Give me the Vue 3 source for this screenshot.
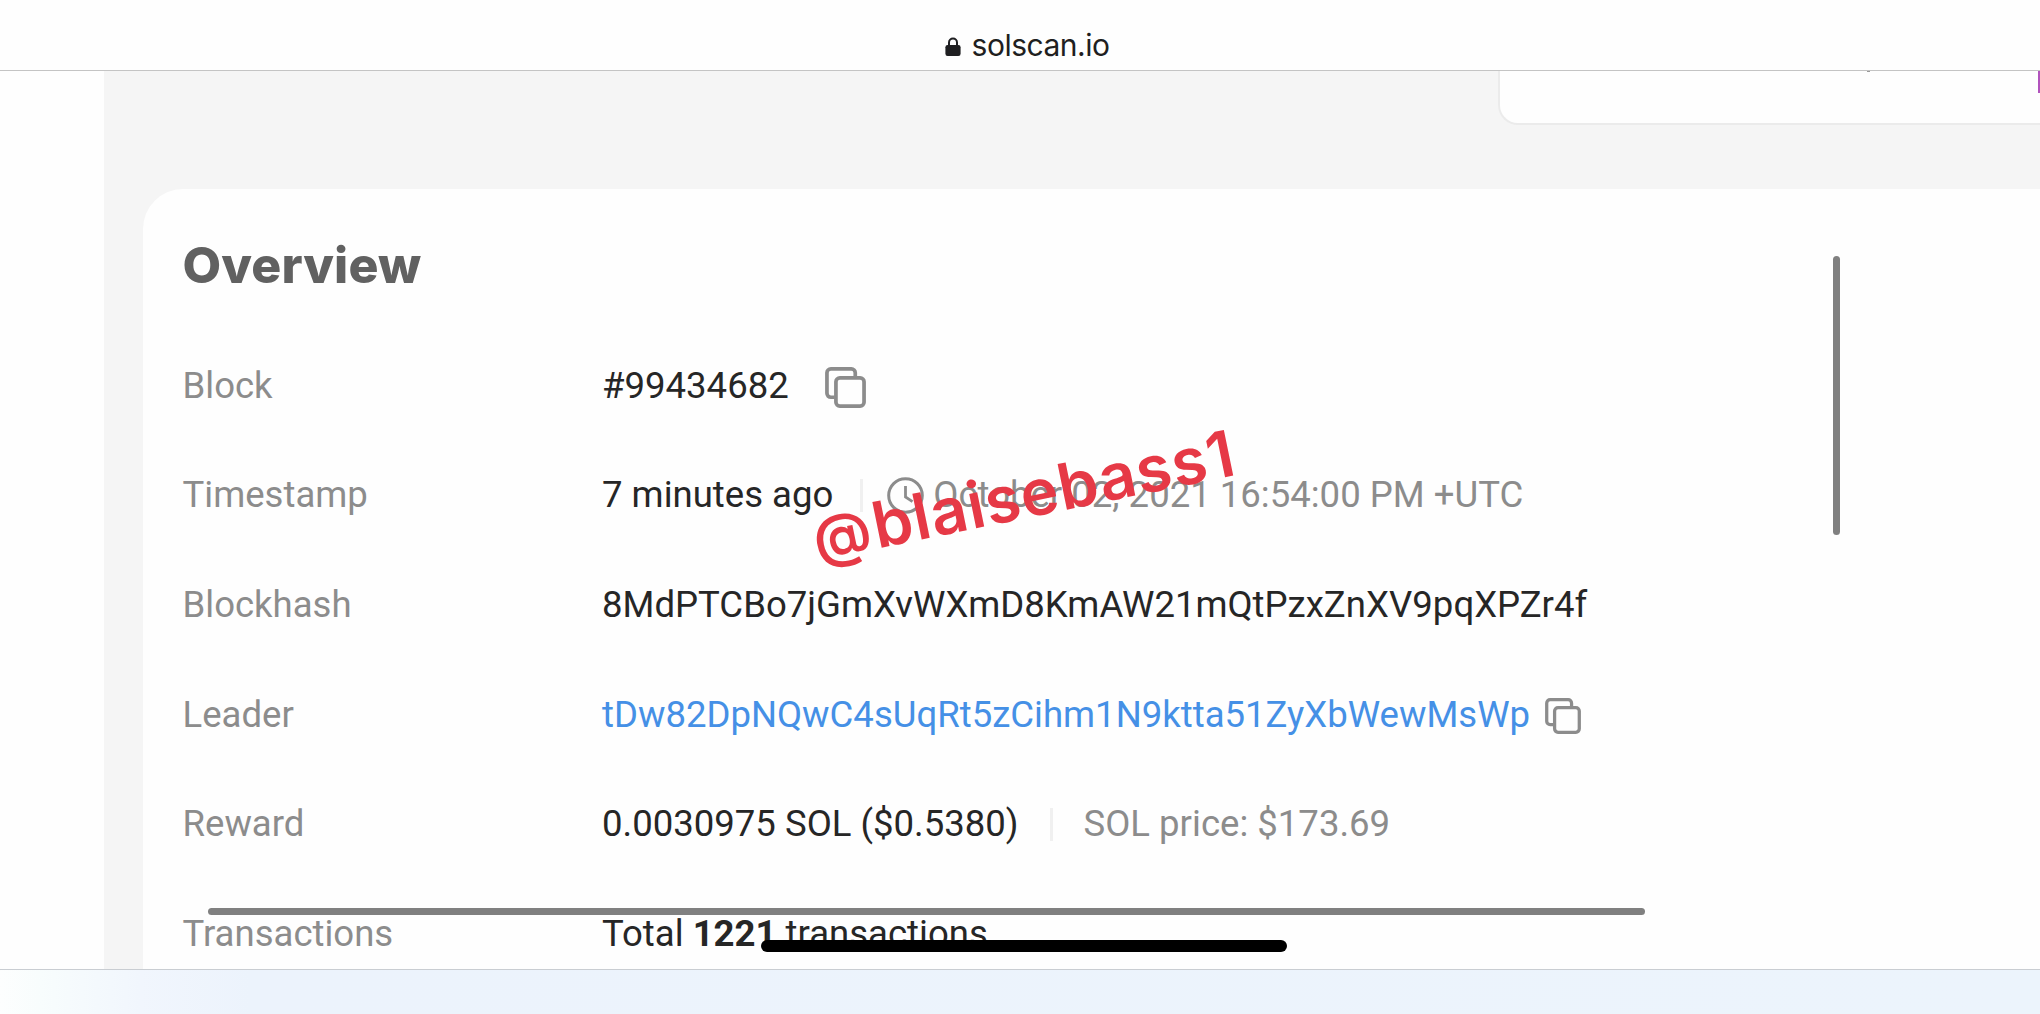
<template>
  <div class="browser">
    <!-- address bar -->
    <header class="address-bar">
      <svg class="lock-icon" viewBox="0 0 16 20">
        <path d="M4 9V5.6a4 4 0 0 1 8 0V9" fill="none" stroke="#1f1f21" stroke-width="2" />
        <rect x="0.4" y="8" width="15.2" height="11" rx="2.2" fill="#1f1f21" />
      </svg>
      <span class="address-text">solscan.io</span>
    </header>

    <!-- page -->
    <main class="page">
      <aside class="sidebar"></aside>

      <div class="content">
        <div class="top-row">
          <div class="stat-card">
            <span class="stat-descender"></span>
            <span class="stat-accent"></span>
          </div>
        </div>

        <section class="overview-card">
          <h2 class="overview-title">Overview</h2>

          <div v-for="row in rows" :key="row.label" class="info-row">
            <span class="info-label">{{ row.label }}</span>

            <div class="info-value" :class="row.key">
              <a v-if="row.link" class="value-link">{{ row.value }}</a>
              <span v-else-if="row.count" class="value-text">
                Total <strong>{{ row.count }}</strong> transactions
              </span>
              <span v-else class="value-text">{{ row.value }}</span>

              <svg v-if="row.copy" class="copy-icon" viewBox="0 0 42 42">
                <path
                  d="M10 31H6a4 4 0 0 1-4-4V6a4 4 0 0 1 4-4h21a4 4 0 0 1 4 4v4.5"
                  fill="none"
                  stroke="#8c8c8c"
                  stroke-width="3.8"
                />
                <rect
                  x="11.2"
                  y="11.2"
                  width="28.8"
                  height="28.8"
                  rx="4"
                  fill="none"
                  stroke="#8c8c8c"
                  stroke-width="3.8"
                />
              </svg>

              <span v-if="row.note" class="divider"></span>
              <svg v-if="row.clock" class="clock-icon" viewBox="0 0 37 37">
                <circle cx="18.5" cy="18.5" r="16.8" fill="none" stroke="#8c8c8c" stroke-width="3" />
                <path d="M18.5 9v11l7 4.6" fill="none" stroke="#8c8c8c" stroke-width="2.8" />
              </svg>
              <span v-if="row.note" class="value-note">{{ row.note }}</span>
            </div>
          </div>
        </section>
      </div>
    </main>

    <!-- bottom toolbar -->
    <footer class="toolbar"></footer>

    <!-- overlays -->
    <span class="watermark"><span class="watermark-at">@</span>blaisebass1</span>
    <span class="scrollbar-vertical"></span>
    <span class="scrollbar-horizontal"></span>
    <span class="home-indicator"></span>
  </div>
</template>

<script setup>
const rows = [
  { key: 'block', label: 'Block', value: '#99434682', copy: true },
  {
    key: 'timestamp',
    label: 'Timestamp',
    value: '7 minutes ago',
    clock: true,
    note: 'October 02, 2021 16:54:00 PM +UTC',
  },
  { key: 'blockhash', label: 'Blockhash', value: '8MdPTCBo7jGmXvWXmD8KmAW21mQtPzxZnXV9pqXPZr4f' },
  {
    key: 'leader',
    label: 'Leader',
    value: 'tDw82DpNQwC4sUqRt5zCihm1N9ktta51ZyXbWewMsWp',
    link: true,
    copy: true,
  },
  { key: 'reward', label: 'Reward', value: '0.0030975 SOL ($0.5380)', note: 'SOL price: $173.69' },
  { key: 'transactions', label: 'Transactions', count: 1221 },
]
</script>

<style>
body {
  margin: 0;
  background: #fefefe;
}
</style>

<style scoped>
.browser {
  position: relative;
  width: 100%;
  height: 100vh;
  display: flex;
  flex-direction: column;
  overflow: hidden;
  background: #fefefe;
  font-family: Roboto, sans-serif;
}

.address-bar {
  box-sizing: border-box;
  height: 71px;
  flex-shrink: 0;
  display: flex;
  align-items: flex-end;
  justify-content: center;
  gap: 11px;
  padding: 0 0 8px 14px;
  border-bottom: 1px solid #c4c4c4;
  background: #fefefe;
}

.lock-icon {
  width: 16px;
  height: 20px;
  margin-bottom: 5px;
}

.address-text {
  font-family: Inter, sans-serif;
  font-size: 30px;
  line-height: 34px;
  letter-spacing: -0.5px;
  color: #1f1f21;
}

.page {
  flex: 1;
  min-height: 0;
  display: flex;
  overflow: hidden;
}

.sidebar {
  width: 104px;
  flex-shrink: 0;
  background: #fefefe;
}

.content {
  flex: 1;
  min-width: 0;
  padding-left: 39px;
  background: #f5f5f5;
}

.top-row {
  height: 117.5px;
  display: flex;
  justify-content: flex-end;
  align-items: flex-start;
}

.stat-card {
  box-sizing: border-box;
  width: 542px;
  height: 54px;
  display: flex;
  justify-content: space-between;
  padding-left: 367px;
  border: solid #ebebeb;
  border-width: 0 0 2px 2px;
  border-bottom-left-radius: 20px;
  background: #fefefe;
}

.stat-descender {
  width: 3px;
  height: 1px;
  background: #999;
}

.stat-accent {
  width: 2px;
  height: 22px;
  background: #b153bd;
}

.overview-card {
  box-sizing: border-box;
  height: 900px;
  padding: 43.5px 0 0 39.5px;
  border-top-left-radius: 40px;
  background: #fefefe;
}

.overview-title {
  height: 99px;
  margin: 0;
  font-family: Inter, sans-serif;
  font-size: 50px;
  font-weight: 800;
  line-height: 66px;
  letter-spacing: 0.1px;
  color: #616161;
}

.info-row {
  height: 109.6px;
  display: flex;
  align-items: center;
  font-size: 36.54px;
  line-height: 44px;
  white-space: nowrap;
}

.info-label {
  width: 419.5px;
  color: #8c8c8c;
}

.info-value {
  display: flex;
  align-items: center;
  color: #262626;
}

.value-link {
  color: #4590e6;
}

.value-note {
  color: #8c8c8c;
}

.copy-icon {
  width: 41px;
  height: 41px;
  margin: 3px 0 0 36px;
}

.leader .copy-icon {
  width: 36px;
  height: 36px;
  margin-left: 15px;
}

.divider {
  width: 3px;
  height: 33px;
  margin: 0 31px;
  background: #f0f0f0;
}

.timestamp .divider {
  margin: 0 24px 0 27px;
}

.clock-icon {
  width: 37px;
  height: 37px;
  margin-right: 9px;
}

.toolbar {
  box-sizing: border-box;
  height: 45px;
  flex-shrink: 0;
  border-top: 1px solid #c9cdd2;
  background: linear-gradient(90deg, #fdfefe 0, #f8fdfd 40px, #f1f6fd 140px, #ecf3fc 250px, #ecf4fc 100%);
}

/* everything below floats over the page */
.watermark {
  position: absolute;
  left: 809px;
  top: 457px;
  font-family: Inter, sans-serif;
  font-size: 64px;
  font-weight: 600;
  line-height: 76px;
  letter-spacing: 1px;
  white-space: nowrap;
  color: #e63946;
  transform: rotate(-11.6deg);
}

.watermark-at {
  margin-right: 2px;
  font-size: 58px;
}

.scrollbar-vertical {
  position: absolute;
  left: 1833px;
  top: 256px;
  width: 7px;
  height: 279px;
  border-radius: 4px;
  background: #808080;
}

.scrollbar-horizontal {
  position: absolute;
  left: 208px;
  top: 908px;
  width: 1437px;
  height: 7px;
  border-radius: 4px;
  background: #808080;
}

.home-indicator {
  position: absolute;
  left: 761px;
  top: 940px;
  width: 526px;
  height: 12px;
  border-radius: 6px;
  background: #000;
}
</style>
